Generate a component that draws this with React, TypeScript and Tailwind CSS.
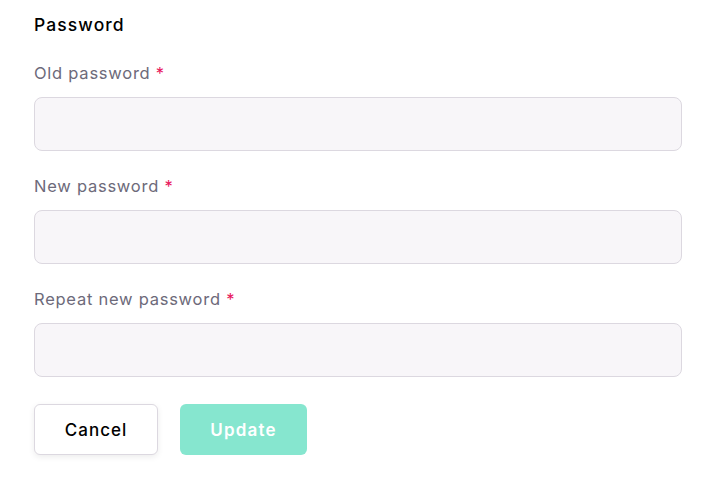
import React from "react";

function Field({ label }: { label: string }) {
  return (
    <div className="flex flex-col">
      <label className="h-6 text-[16.5px] leading-6 tracking-[0.75px] text-[#6d6a7a]">
        {label} <span className="text-[#e8175d]">*</span>
      </label>
      <input
        type="password"
        className="mt-3 h-[54px] w-full rounded-lg border border-[#dcd8e0] bg-[#f8f6f9] px-4 outline-none"
      />
    </div>
  );
}

export default function App() {
  return (
    <div
      className="min-h-[482px] w-[718px] bg-white pl-[34px] pr-[36px] pt-[13px]"
      style={{ fontFamily: "Inter, 'Noto Sans', sans-serif" }}
    >
      <h2 className="h-6 text-[17.5px] font-medium leading-6 tracking-[1.1px] text-black">Password</h2>
      <div className="mt-6 flex flex-col gap-[23px]">
        <Field label="Old password" />
        <Field label="New password" />
        <Field label="Repeat new password" />
      </div>
      <div className="mt-[27px] flex gap-[22px]">
        <button className="h-[51px] w-[124px] rounded-md border border-[#dcd8e0] bg-white pt-[2px] text-[17px] font-medium tracking-[1px] text-black shadow-[0_2px_6px_rgba(0,0,0,0.08)]">
          Cancel
        </button>
        <button className="h-[51px] w-[127px] rounded-md bg-[#86e6cf] pt-[2px] text-[17px] font-semibold tracking-[1.2px] text-white">
          Update
        </button>
      </div>
    </div>
  );
}
